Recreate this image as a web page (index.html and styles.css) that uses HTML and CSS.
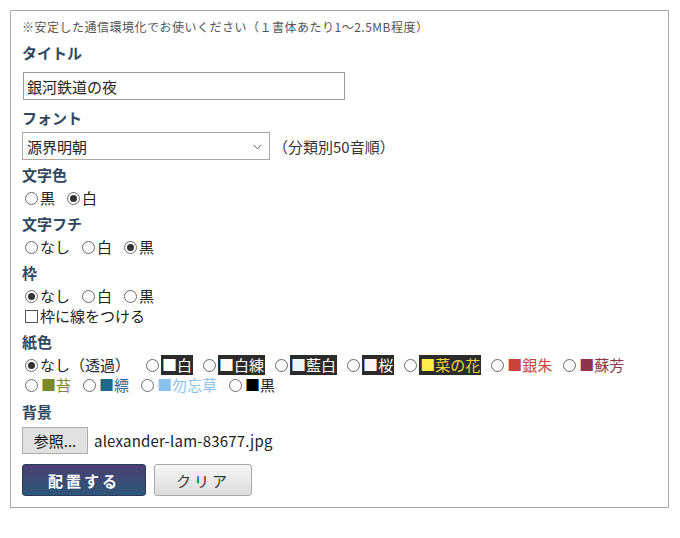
FILE: index.html
```html
<!DOCTYPE html>
<html lang="ja">
<head>
<meta charset="utf-8">
<link rel="stylesheet" href="styles.css">
</head>
<body>
<div class="panel">
  <p class="note">※安定した通信環境化でお使いください（１書体あたり1〜2.5MB程度）</p>

  <div class="label first">タイトル</div>
  <input class="text" type="text" value="銀河鉄道の夜">

  <div class="label l-font">フォント</div>
  <div class="font-row">
    <div class="select-wrap">
      <select class="select"><option>源界明朝</option></select>
      <svg class="chev" width="9" height="6" viewBox="0 0 9 6"><polyline points="0.5,0.8 4.5,4.8 8.5,0.8" fill="none" stroke="#555" stroke-width="1"/></svg>
    </div>
    <span class="hint">（分類別50音順）</span>
  </div>

  <div class="label l-tight">文字色</div>
  <div class="row">
    <label class="opt"><input type="radio" name="c">黒</label>
    <label class="opt"><input type="radio" name="c" checked>白</label>
  </div>

  <div class="label">文字フチ</div>
  <div class="row">
    <label class="opt"><input type="radio" name="f">なし</label>
    <label class="opt"><input type="radio" name="f">白</label>
    <label class="opt"><input type="radio" name="f" checked>黒</label>
  </div>

  <div class="label">枠</div>
  <div class="row">
    <label class="opt"><input type="radio" name="w" checked>なし</label>
    <label class="opt"><input type="radio" name="w">白</label>
    <label class="opt"><input type="radio" name="w">黒</label>
  </div>
  <div class="row">
    <label class="opt"><input type="checkbox">枠に線をつける</label>
  </div>

  <div class="label">紙色</div>
  <div class="row paper">
    <label class="opt wide"><input type="radio" name="p" checked>なし（透過）</label>
    <label class="opt"><input type="radio" name="p"><span class="chip"><span class="c-shiro">■</span>白</span></label>
    <label class="opt"><input type="radio" name="p"><span class="chip"><span class="c-shironeri">■</span>白練</span></label>
    <label class="opt"><input type="radio" name="p"><span class="chip"><span class="c-aijiro">■</span>藍白</span></label>
    <label class="opt"><input type="radio" name="p"><span class="chip"><span class="c-sakura">■</span>桜</span></label>
    <label class="opt"><input type="radio" name="p"><span class="chip t-nanohana"><span class="c-nanohana">■</span>菜の花</span></label>
    <label class="opt"><input type="radio" name="p"><span class="plain c-ginshu">■銀朱</span></label>
    <label class="opt"><input type="radio" name="p"><span class="plain c-suou">■蘇芳</span></label>
  </div>
  <div class="row paper2">
    <label class="opt"><input type="radio" name="p"><span class="plain c-koke">■苔</span></label>
    <label class="opt"><input type="radio" name="p"><span class="plain c-hanada">■縹</span></label>
    <label class="opt"><input type="radio" name="p"><span class="plain c-wasure">■勿忘草</span></label>
    <label class="opt"><input type="radio" name="p"><span class="plain"><span class="c-kuro">■</span>黒</span></label>
  </div>

  <div class="label l-bg">背景</div>
  <div class="file-row">
    <span class="file-btn">参照...</span>
    <span class="file-name">alexander-lam-83677.jpg</span>
  </div>

  <div class="actions">
    <button class="btn primary" type="button">配置する</button>
    <button class="btn secondary" type="button">クリア</button>
  </div>
</div>
</body>
</html>
```

FILE: styles.css
```css
* { box-sizing: border-box; }

body {
  margin: 0;
  background: #fff;
  color: #222;
  font-family: "Noto Sans CJK JP", "Noto Sans", sans-serif;
}

.panel {
  margin: 10px;
  width: 659px;
  border: 1px solid #aaa;
  padding: 8px 12px 11px 11px;
}

.note {
  margin: 0;
  font-size: 12px;
  line-height: 16px;
  letter-spacing: 0.5px;
  color: #555;
}

.label {
  font-size: 15px;
  font-weight: bold;
  line-height: 26px;
  color: #2f4860;
  margin-top: 3px;
}
.label.first { margin-top: 5px; }
.label.l-font { margin-top: 5px; }
.label.l-tight { margin-top: 2px; }
.label.l-bg { margin-top: 4px; }

.text {
  display: block;
  margin: 6px 0 0 1px;
  width: 322px;
  height: 28px;
  border: 1px solid #999;
  padding: 0 3px;
  font-family: inherit;
  font-size: 15px;
  color: #222;
}

.font-row {
  display: flex;
  align-items: center;
  margin-top: 1px;
}

.select-wrap {
  position: relative;
  width: 248px;
  height: 28px;
}

.select {
  appearance: none;
  -webkit-appearance: none;
  width: 100%;
  height: 100%;
  border: 1px solid #aaa;
  background: #fff;
  padding: 0 4px;
  font-family: inherit;
  font-size: 15px;
  color: #222;
}

.chev {
  position: absolute;
  right: 8px;
  top: 12px;
}

.hint {
  margin-left: 3px;
  font-size: 15px;
  color: #333;
}

.row {
  display: flex;
  align-items: center;
  height: 20px;
  font-size: 15px;
  line-height: 20px;
  color: #222;
  padding-left: 3px;
}

.opt {
  display: inline-flex;
  align-items: center;
  margin-right: 12px;
  white-space: nowrap;
}
.paper .opt { margin-right: 10px; }
.paper2 .opt { margin-right: 11px; }
.paper .opt.wide { margin-right: 16px; }

.opt input {
  appearance: none;
  -webkit-appearance: none;
  width: 13px;
  height: 13px;
  margin: 0 2px 0 0;
  border: 1px solid #6a6a6a;
  background: #fff;
  flex: none;
}

.opt input[type="radio"] {
  border-radius: 50%;
  position: relative;
}

.opt input[type="radio"]:checked::after {
  content: "";
  position: absolute;
  left: 2px;
  top: 2px;
  width: 7px;
  height: 7px;
  border-radius: 50%;
  background: #333;
}

.opt input[type="checkbox"] {
  border-color: #555;
}

.chip {
  background: #2b2b2b;
  color: #fff;
  padding: 0 1px;
}

.plain { padding: 0 1px; }

.c-shiro { color: #ffffff; }
.c-shironeri { color: #fcfaf2; }
.c-aijiro { color: #ebf6f7; }
.c-sakura { color: #fef4f4; }
.c-nanohana { color: #ffec47; }
.t-nanohana { color: #ecd63a; }
.c-ginshu { color: #c8443a; }
.c-suou { color: #8e354a; }
.c-koke { color: #7d882a; }
.c-hanada { color: #1f6a8a; }
.c-wasure { color: #89c3eb; }
.c-kuro { color: #000; }

.file-row {
  display: flex;
  align-items: center;
  margin-top: 2px;
}

.file-btn {
  display: inline-flex;
  align-items: center;
  justify-content: center;
  width: 66px;
  height: 27px;
  background: #e1e1e1;
  border: 1px solid #adadad;
  font-size: 15px;
  color: #111;
}

.file-name {
  margin-left: 6px;
  font-size: 15px;
  letter-spacing: 0.2px;
  color: #222;
}

.actions {
  display: flex;
  gap: 8px;
  margin-top: 10px;
}

.btn {
  height: 32px;
  border-radius: 3px;
  font-family: inherit;
  font-size: 15px;
  letter-spacing: 3px;
  padding: 0;
}

.btn.primary {
  width: 124px;
  background: linear-gradient(#4a3f73, #2c5678);
  border: 1px solid #2a3a58;
  color: #fff;
  font-weight: bold;
}

.btn.secondary {
  width: 98px;
  background: linear-gradient(#f6f6f6, #dcdcdc);
  border: 1px solid #aaa;
  color: #333;
}
```
